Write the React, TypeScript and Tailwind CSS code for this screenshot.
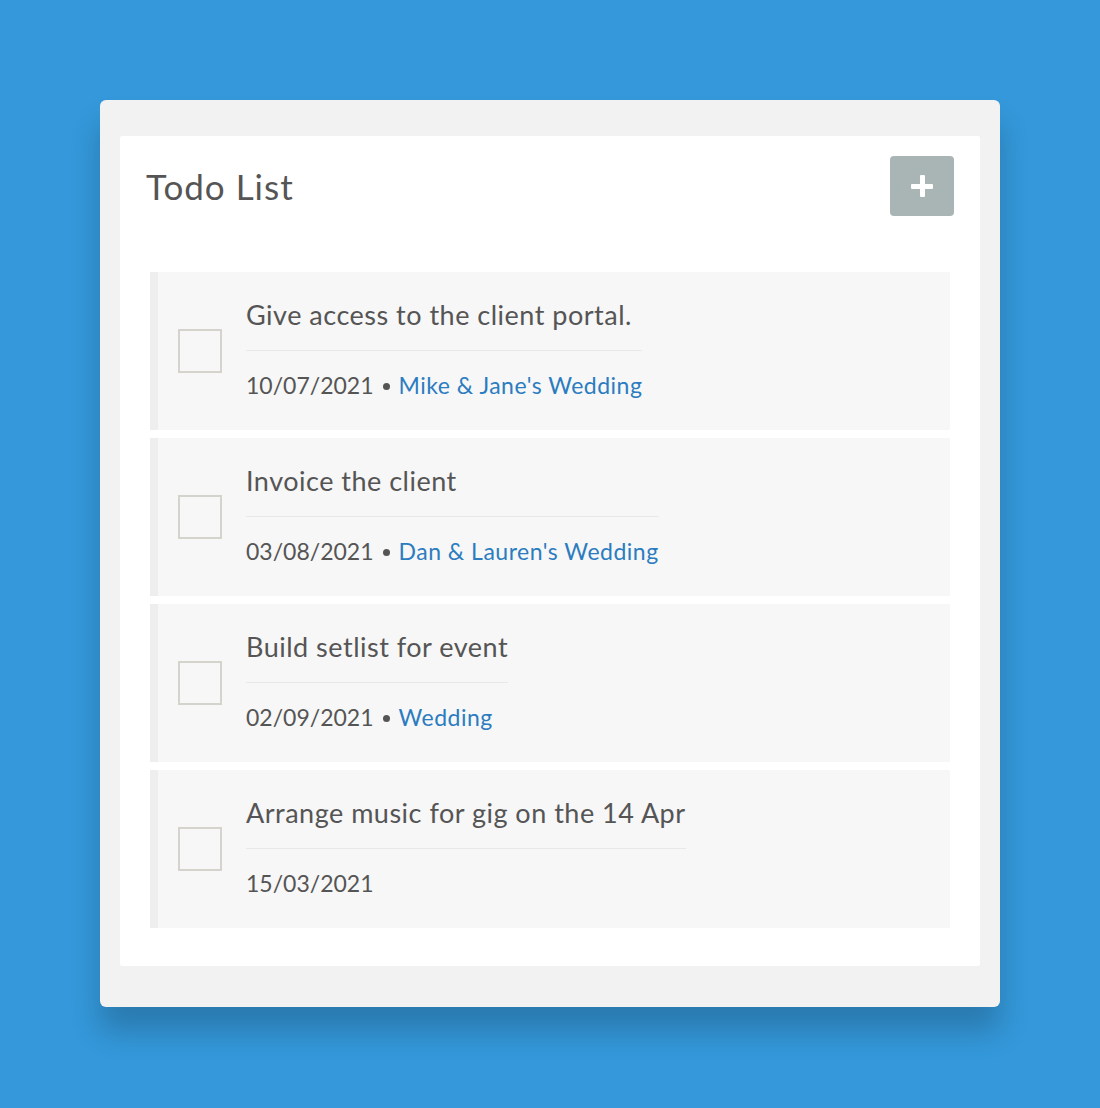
import React from "react";

const items = [
  { title: "Give access to the client portal.", date: "10/07/2021", link: "Mike & Jane's Wedding" },
  { title: "Invoice the client", date: "03/08/2021", link: "Dan & Lauren's Wedding" },
  { title: "Build setlist for event", date: "02/09/2021", link: "Wedding" },
  { title: "Arrange music for gig on the 14 Apr", date: "15/03/2021", link: "" },
];

export default function App() {
  return (
    <div
      className="min-h-screen w-full bg-[#3498da] p-[100px]"
      style={{ fontFamily: "Lato, 'Noto Sans', sans-serif" }}
    >
      <div className="w-[900px] rounded-[6px] bg-[#f2f2f2] px-[20px] pt-[36px] pb-[41px] shadow-[0_24px_30px_rgba(0,0,0,0.2)]">
        <div className="rounded-[2px] bg-white pb-[38px]">
          <div className="flex items-center justify-between px-[26px] pt-[20px]">
            <h1 className="text-[35px] leading-[40px] tracking-[1px] text-[#555555]">Todo List</h1>
            <button className="relative flex h-[60px] w-[64px] items-center justify-center rounded-[4px] bg-[#a9b5b4]">
              <span className="absolute h-[5px] w-[22px] rounded-[1px] bg-white" />
              <span className="absolute h-[22px] w-[5px] rounded-[1px] bg-white" />
            </button>
          </div>
          <div className="mt-[56px] flex flex-col gap-[8px] px-[30px]">
            {items.map((it, i) => (
              <div
                key={i}
                className="flex h-[158px] items-center border-l-[8px] border-[#eeeeee] bg-[#f7f7f7] pl-[20px]"
              >
                <div className="h-[44px] w-[44px] shrink-0 border-2 border-[#d4d4cc] bg-[#f7f7f7]" />
                <div className="ml-[24px] mt-[-5px] inline-flex flex-col">
                  <div className="border-b border-[#e8e8e8] pb-[18px] text-[27px] leading-[34px] tracking-[0.5px] text-[#555555]">
                    {it.title}
                  </div>
                  <div className="flex items-center pt-[19px] text-[23px] leading-[30px] text-[#555555]">
                    <span>{it.date}</span>
                    {it.link && (
                      <>
                        <span className="mx-[9px] mt-[3px] inline-block h-[7px] w-[7px] rounded-full bg-[#555555]" />
                        <span className="tracking-[0.5px] text-[#2c7cc0]">{it.link}</span>
                      </>
                    )}
                  </div>
                </div>
              </div>
            ))}
          </div>
        </div>
      </div>
    </div>
  );
}
